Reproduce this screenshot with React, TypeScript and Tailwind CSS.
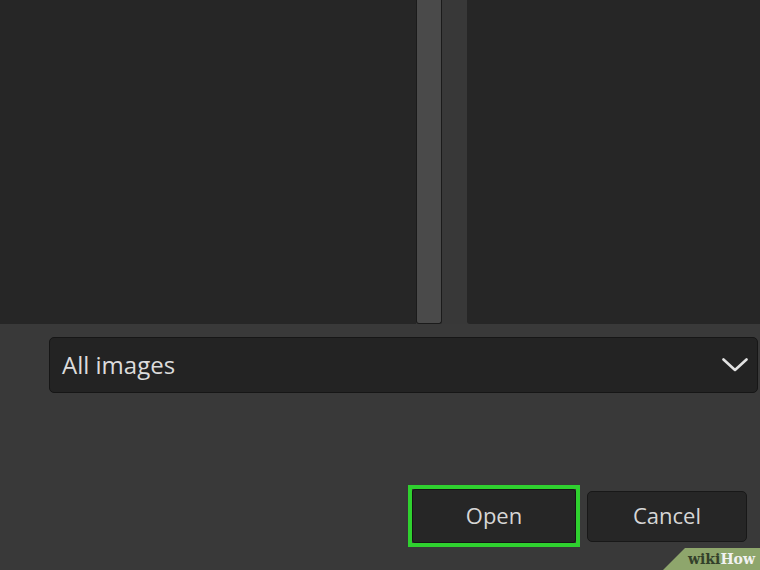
import React from "react";

const font = { fontFamily: '"Open Sans", "Liberation Sans", sans-serif' };

const Chevron = () => (
  <svg width="26" height="14" viewBox="0 0 26 14" fill="none">
    <path d="M1.5 1.5 L13 12 L24.5 1.5" stroke="#e2e2e2" strokeWidth="2.6" strokeLinecap="round" strokeLinejoin="round" />
  </svg>
);

const App = () => {
  return (
    <div className="relative flex h-[570px] w-[760px] flex-col overflow-hidden bg-[#393939]" style={font}>
      {/* file list + preview panes */}
      <div className="flex h-[324px] shrink-0">
        <div className="w-[416px] bg-[#262626]" />
        <div className="flex w-[51px] bg-[#383838]">
          <div className="h-full w-[26px] rounded-b-[3px] border-x border-b border-[#1b1b1b] bg-[#4a4a4a]" />
        </div>
        <div className="flex-1 rounded-bl-[3px] bg-[#262626]" />
      </div>

      {/* file type select */}
      <div className="ml-[49px] mt-[13px] flex h-[56px] w-[709px] items-center justify-between rounded-[5px] border border-[#161616] bg-[#232323] pl-[12px] pr-[9px]">
        <span className="text-[24px] leading-none text-[#dcdcdc]">All images</span>
        <Chevron />
      </div>

      {/* actions */}
      <div className="mt-[92px] flex items-center justify-end gap-[7px] pr-[13px]">
        <div className="border-[4px] border-[#2fd12f]">
          <button className="flex h-[54px] w-[164px] items-center justify-center rounded-[3px] border border-[#151515] bg-[#262626] pb-[2px] text-[22px] text-[#d6d6d6]">
            Open
          </button>
        </div>
        <button className="flex h-[51px] w-[160px] items-center justify-center rounded-[5px] border border-[#181818] bg-[#262626] pb-[2px] text-[22px] text-[#d6d6d6]">
          Cancel
        </button>
      </div>

      {/* watermark */}
      <div className="absolute bottom-0 right-0 flex h-[22px] w-[97px] items-center justify-end pr-[5px] [clip-path:polygon(22px_0,100%_0,100%_100%,0_100%)] bg-[#8ea66c]">
        <span className="text-[14px] font-bold leading-none" style={{ fontFamily: '"DejaVu Serif", "Liberation Serif", serif' }}>
          <span className="text-[#33402a]">wiki</span>
          <span className="text-[#f2f2f2]">How</span>
        </span>
      </div>
    </div>
  );
};

export default App;
